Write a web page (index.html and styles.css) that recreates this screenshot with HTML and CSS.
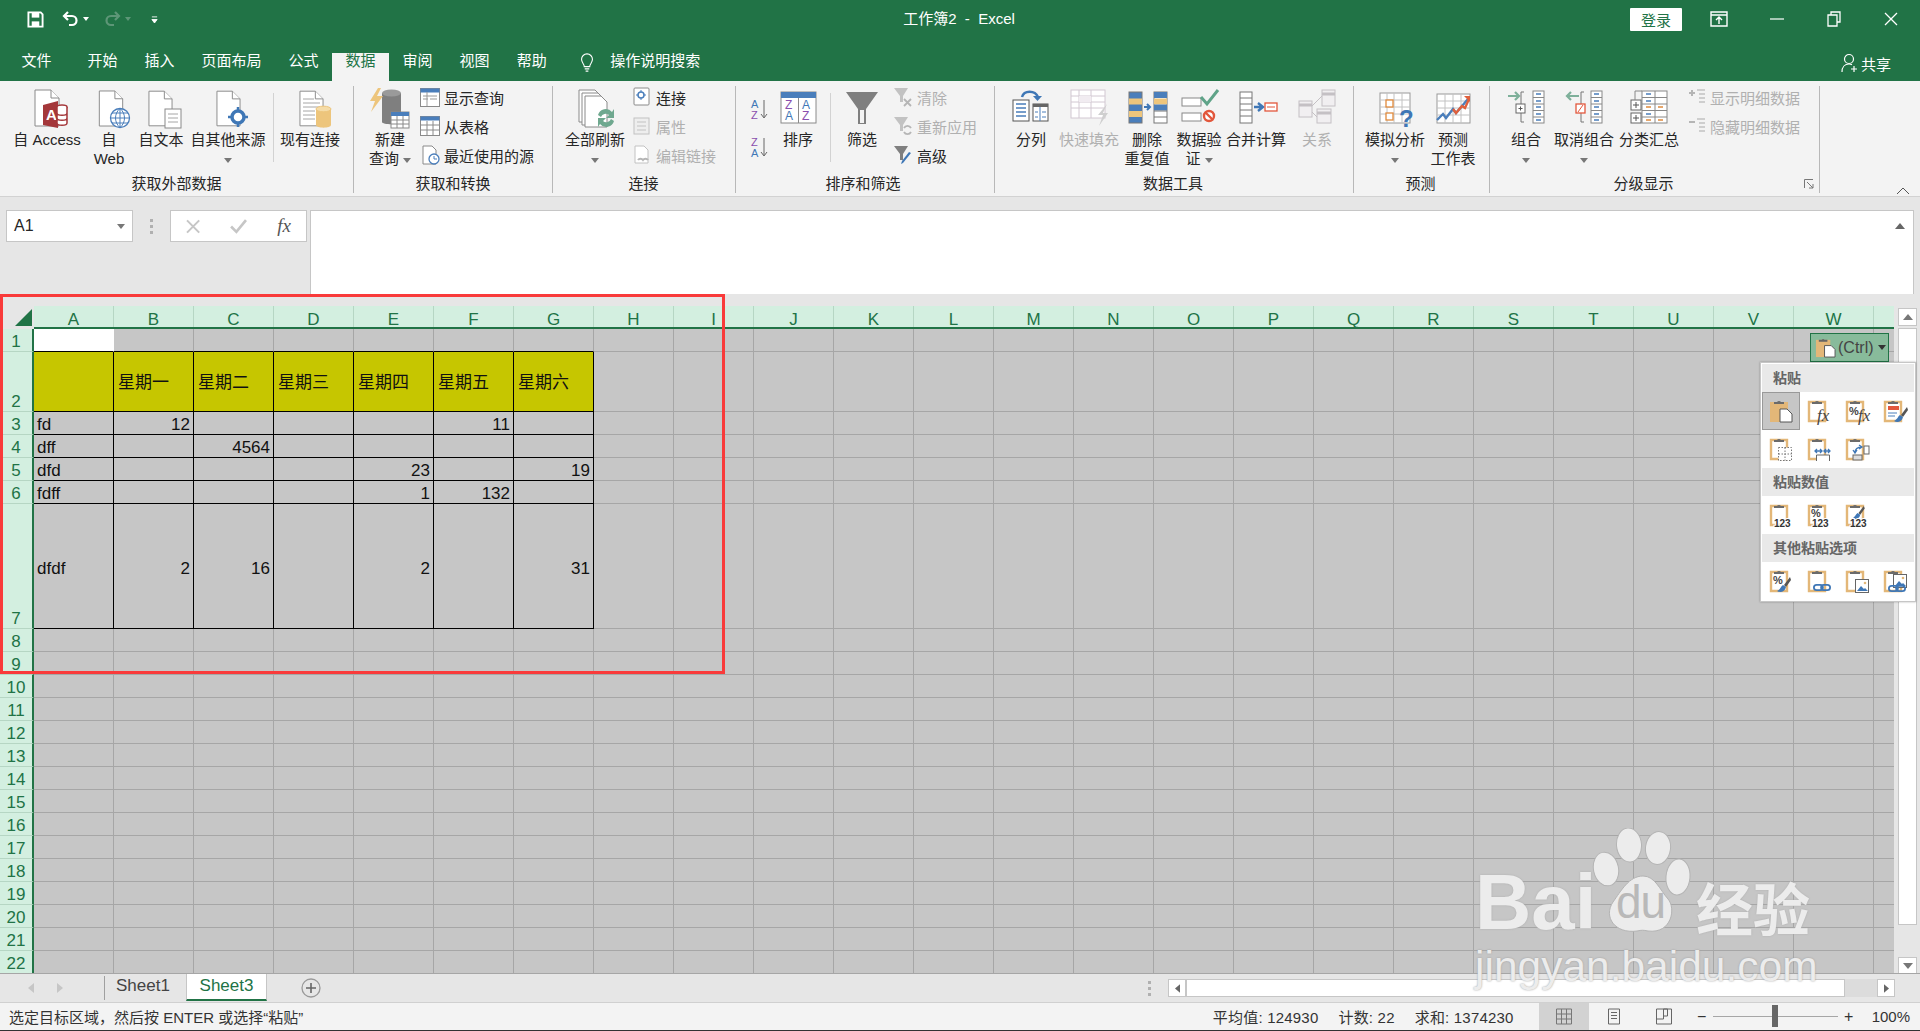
FILE: index.html
```html
<!DOCTYPE html>
<html lang="zh-CN">
<head>
<meta charset="utf-8">
<title>工作簿2 - Excel</title>
<link rel="stylesheet" href="styles.css">
</head>
<body>
<svg class="defs" aria-hidden="true">
  <symbol id="doc" viewBox="0 0 26 38"><path d="M1 1h16l8 8v28H1z" fill="#fff" stroke="#8a8a8a"/><path d="M17 1v8h8" fill="#fff" stroke="#8a8a8a"/></symbol>
  <symbol id="clip" viewBox="0 0 26 26"><path d="M3 4h16v19H3z" fill="#fff" stroke="#e3b778" stroke-width="2.4"/><path d="M6 6V4h3a2.5 2.5 0 0 1 4 0h3v2z" fill="#6b6b6b"/></symbol>
  <symbol id="brush" viewBox="0 0 14 18"><path d="M13 1 7 9l2 2 5-7z" fill="#555"/><path d="M6 9c-2 1-2 4-6 6 3 2 8 1 9-4z" fill="#3f77b6"/></symbol>
  <symbol id="chain" viewBox="0 0 20 10"><rect x="1" y="2" width="10" height="6" rx="3" fill="none" stroke="#3f77b6" stroke-width="2"/><rect x="9" y="2" width="10" height="6" rx="3" fill="none" stroke="#3f77b6" stroke-width="2"/></symbol>
  <symbol id="pic" viewBox="0 0 14 14"><rect x=".5" y=".5" width="13" height="13" fill="#fff" stroke="#666"/><path d="M2 12l4-5 3 3 1-1 3 3z" fill="#3f77b6"/><circle cx="10" cy="4" r="1.3" fill="#e3b778"/></symbol>
  <symbol id="tbl" viewBox="0 0 20 20"><rect x=".5" y=".5" width="19" height="19" fill="#fff" stroke="#8a8a8a"/><rect x=".5" y=".5" width="19" height="4" fill="#4a7ebb"/><path d="M.5 9h19M.5 14h19M7 5v15M13 5v15" stroke="#8a8a8a" fill="none"/></symbol>
</svg>
<div class="app">

  <header class="title">
    <div class="qat">
      <svg class="qi save" viewBox="0 0 18 18"><path d="M1.5 1.5h13l2 2v13h-15z" fill="none" stroke="#fff" stroke-width="2"/><rect x="5" y="2" width="8" height="5" fill="#fff"/><rect x="5" y="11" width="8" height="5" fill="#fff"/></svg>
      <svg class="qi undo" viewBox="0 0 18 18"><path d="M6 2 2 6l4 4M2.500 6H10a4.500 4.500 0 0 1 0 9H7" fill="none" stroke="#fff" stroke-width="2.200"/></svg>
      <i class="qcaret"></i>
      <svg class="qi redo" viewBox="0 0 18 18"><path d="M12 2l4 4-4 4M15.500 6H8a4.500 4.500 0 0 0 0 9h3" fill="none" stroke="#5d9677" stroke-width="2.200"/></svg>
      <i class="qcaret dim"></i>
      <svg class="qi more" viewBox="0 0 8 10"><path d="M1 2h6M1 5h6L4 9z" fill="#fff" stroke="#fff"/></svg>
    </div>
    <div class="doc-name">工作簿2 &nbsp;-&nbsp; Excel</div>
    <div class="winctl">
      <button class="login">登录</button>
      <svg class="wi opt" viewBox="0 0 18 16"><path d="M1 1h16v14H1zM1 4h16M9 13V7M6 9l3-3 3 3" fill="none" stroke="#fff" stroke-width="1.400"/></svg>
      <svg class="wi min" viewBox="0 0 14 14"><path d="M0 7h14" stroke="#fff" stroke-width="1.200"/></svg>
      <svg class="wi rest" viewBox="0 0 14 16"><path d="M1 4h9v11H1zM4 4V1h9v10h-3" fill="none" stroke="#fff" stroke-width="1.300"/></svg>
      <svg class="wi close" viewBox="0 0 14 14"><path d="M1 1l12 12M13 1 1 13" stroke="#fff" stroke-width="1.300"/></svg>
    </div>
  </header>

  <nav class="tabs">
    <span class="tab first">文件</span><span class="tab">开始</span><span class="tab">插入</span><span class="tab">页面布局</span><span class="tab">公式</span><span class="tab active">数据</span><span class="tab">审阅</span><span class="tab">视图</span><span class="tab">帮助</span>
    <svg class="bulb" viewBox="0 0 16 22"><path d="M5 15c0-3-3-4-3-8a6 6 0 0 1 12 0c0 4-3 5-3 8z" fill="none" stroke="#fff" stroke-width="1.200"/><path d="M5.500 17.500h5M6.500 20h3" stroke="#fff" stroke-width="1.500"/></svg>
    <span class="search">操作说明搜索</span>
    <span class="share"><svg class="share-i" viewBox="0 0 18 20"><circle cx="8" cy="6" r="4.500" fill="none" stroke="#fff" stroke-width="1.200"/><path d="M1 19c0-5 3-8 7-8 1 0 2 .2 3 .6M13 13v6M10 16h6" fill="none" stroke="#fff" stroke-width="1.200"/></svg>共享</span>
  </nav>

  <section class="ribbon">
    <div class="group g1">
      <div class="gbody">
        <div class="btn b-access"><svg class="ico" viewBox="0 0 44 44"><use href="#doc" x="9" y="3" width="26" height="38"/><path d="M18 19l15-4v27l-15-3z" fill="#a4373a"/><text class="t-a" x="21" y="34">A</text><ellipse cx="37" cy="21" rx="5" ry="2" fill="#fff" stroke="#a4373a" stroke-width="1.500"/><path d="M32 21v16c0 3 10 3 10 0V21M32 27c0 3 10 3 10 0M32 32c0 3 10 3 10 0" fill="#fff" stroke="#a4373a" stroke-width="1.500"/></svg><span class="lab">自 Access</span></div>
        <div class="btn b-web"><svg class="ico" viewBox="0 0 44 44"><use href="#doc" x="11" y="4" width="26" height="37"/><circle cx="33" cy="32" r="9.500" fill="#fff" stroke="#4a7ebb" stroke-width="1.300"/><path d="M23.500 32h19M25 27h16M25 37h16M33 22.500v19M33 22.500c-6 5-6 14 0 19M33 22.500c6 5 6 14 0 19" fill="none" stroke="#4a7ebb"/></svg><span class="lab">自<br>Web</span></div>
        <div class="btn b-text"><svg class="ico" viewBox="0 0 44 44"><use href="#doc" x="9" y="4" width="25" height="37"/><rect x="26" y="23" width="16" height="19" fill="#fff" stroke="#8a8a8a"/><path d="M29 28h10M29 32h10M29 36h10" stroke="#a6a6a6" fill="none"/></svg><span class="lab">自文本</span></div>
        <div class="btn b-other"><svg class="ico" viewBox="0 0 44 44"><use href="#doc" x="10" y="4" width="25" height="37"/><circle cx="32" cy="31" r="6" fill="#fff" stroke="#3f77b6" stroke-width="3.500"/><path d="M32 21v5M32 36v5M22 31h5M37 31h5" stroke="#3f77b6" stroke-width="2.500"/></svg><span class="lab">自其他来源<br><i class="caret"></i></span></div>
        <div class="vsep"></div>
        <div class="btn b-exist"><svg class="ico" viewBox="0 0 44 44"><use href="#doc" x="11" y="4" width="25" height="37"/><path d="M15 13h11M15 17h17M15 21h17M15 25h12M15 29h12M15 33h12" stroke="#a6a6a6"/><path d="M28 23v16c0 3.500 15 3.500 15 0V23z" fill="#edc57c"/><ellipse cx="35.500" cy="23" rx="7.500" ry="2.800" fill="#f5dca8" stroke="#edc57c"/></svg><span class="lab">现有连接</span></div>
      </div>
      <div class="glabel">获取外部数据</div>
    </div>

    <div class="group g2">
      <div class="gbody">
        <div class="btn b-query"><svg class="ico" viewBox="0 0 44 44"><path d="M14 7v29c0 3 19 3 19 0V7z" fill="#7f7f7f"/><ellipse cx="23.500" cy="7" rx="9.500" ry="3.500" fill="#9a9a9a"/><path d="M10 2 2 15h5L3 26l12-16H9l4-8z" fill="#edc57c"/><rect x="23" y="26" width="18" height="16" fill="#fff" stroke="#8a8a8a"/><rect x="23" y="26" width="18" height="4" fill="#4a7ebb"/><path d="M23 34h18M23 38h18M29 30v12M35 30v12" stroke="#8a8a8a"/></svg><span class="lab">新建<br>查询 <i class="caret"></i></span></div>
        <div class="small">
          <div class="si"><svg class="sico" viewBox="0 0 20 20"><rect x=".5" y="1.500" width="19" height="18" fill="#fff" stroke="#8a8a8a"/><rect x=".5" y="1.500" width="19" height="4" fill="#4a7ebb"/><path d="M3 9h14M3 12h5M10 12h7M7 5v14" stroke="#999"/></svg>显示查询</div>
          <div class="si"><svg class="sico" viewBox="0 0 20 20"><use href="#tbl"/></svg>从表格</div>
          <div class="si"><svg class="sico" viewBox="0 0 20 20"><path d="M3 1h9l4 4v14H3z" fill="#fff" stroke="#8a8a8a"/><circle cx="14" cy="14" r="5" fill="#fff" stroke="#4a7ebb" stroke-width="1.300"/><path d="M14 11v3h3" fill="none" stroke="#4a7ebb"/></svg>最近使用的源</div>
        </div>
      </div>
      <div class="glabel">获取和转换</div>
    </div>

    <div class="group g3">
      <div class="gbody">
        <div class="btn b-refresh"><svg class="ico" viewBox="0 0 44 44"><path d="M6 4h16l6 6v26H6z" fill="#fff" stroke="#8a8a8a"/><path d="M9 7h16l6 6v26H9z" fill="#fff" stroke="#8a8a8a"/><path d="M12 10h16l6 6v25H12z" fill="#fff" stroke="#8a8a8a"/><path d="M25 29a8 8 0 0 1 14-3l2-3v9h-8l3-3a5 5 0 0 0-8 2zM41 35a8 8 0 0 1-14 3l-2 3v-9h8l-3 3a5 5 0 0 0 8-2z" fill="#6fa88f"/></svg><span class="lab">全部刷新<br><i class="caret"></i></span></div>
        <div class="small">
          <div class="si"><svg class="sico" viewBox="0 0 20 20"><rect x="2" y="1" width="15" height="17" rx="1" fill="#fff" stroke="#8a8a8a"/><circle cx="9" cy="8" r="3" fill="#fff" stroke="#4a7ebb" stroke-width="1.500"/><path d="M9 3v2M9 11v2M4 8h2M12 8h2" stroke="#4a7ebb"/></svg>连接</div>
          <div class="si off"><svg class="sico" viewBox="0 0 20 20"><rect x="2" y="2" width="15" height="16" fill="#eee" stroke="#c2c2c2"/><path d="M5 6h9M5 10h9M5 14h9" stroke="#c2c2c2"/></svg>属性</div>
          <div class="si off"><svg class="sico" viewBox="0 0 20 20"><path d="M3 1h9l4 4v13H3z" fill="#fff" stroke="#c2c2c2"/><path d="M6 15a3 3 0 0 1 5 0 3 3 0 0 1 5 0" fill="none" stroke="#b5b5b5" stroke-width="2"/></svg>编辑链接</div>
        </div>
      </div>
      <div class="glabel">连接</div>
    </div>

    <div class="group g4">
      <div class="gbody">
        <div class="azcol">
          <svg class="az" viewBox="0 0 24 24"><text class="t-az1 blue" x="3" y="11">A</text><text class="t-az1 purple" x="3" y="22">Z</text><path d="M16 3v17M13 17l3 4 3-4" fill="none" stroke="#666"/></svg>
          <svg class="az" viewBox="0 0 24 24"><text class="t-az1 purple" x="3" y="11">Z</text><text class="t-az1 blue" x="3" y="22">A</text><path d="M16 3v17M13 17l3 4 3-4" fill="none" stroke="#666"/></svg>
        </div>
        <div class="btn b-sort"><svg class="ico" viewBox="0 0 44 44"><rect x="5" y="6" width="35" height="31" fill="#fff" stroke="#8a8a8a"/><rect x="5" y="6" width="35" height="6" fill="#4a7ebb"/><path d="M22.500 12v25" stroke="#8a8a8a"/><text class="t-az purple" x="9" y="23">Z</text><text class="t-az blue" x="9" y="34">A</text><text class="t-az blue" x="26" y="23">A</text><text class="t-az purple" x="26" y="34">Z</text></svg><span class="lab">排序</span></div>
        <div class="vsep"></div>
        <div class="btn b-filter"><svg class="ico" viewBox="0 0 44 44"><path d="M6 6h32L26 23v15h-8V23z" fill="#7f7f7f"/><path d="M20 24h4v13h-4z" fill="#f3f3f3"/></svg><span class="lab">筛选</span></div>
        <div class="small">
          <div class="si off"><svg class="sico" viewBox="0 0 20 20"><path d="M1 1h14L10 9v6H7V9z" fill="#c2c2c2"/><path d="M11 12l7 7M18 12l-7 7" stroke="#b5b5b5" stroke-width="1.800"/></svg>清除</div>
          <div class="si off"><svg class="sico" viewBox="0 0 20 20"><path d="M1 1h14L10 9v6H7V9z" fill="#c2c2c2"/><path d="M11 12a4 4 0 0 1 7 0M18 16a4 4 0 0 1-7 0" fill="none" stroke="#b5b5b5" stroke-width="1.800"/></svg>重新应用</div>
          <div class="si"><svg class="sico" viewBox="0 0 20 20"><path d="M1 1h14L10 9v6H7V9z" fill="#7f7f7f"/><path d="M18 8l-8 10-2 1 1-3 7-9z" fill="#3f77b6"/></svg>高级</div>
        </div>
      </div>
      <div class="glabel">排序和筛选</div>
    </div>

    <div class="group g5">
      <div class="gbody">
        <div class="btn b-split"><svg class="ico" viewBox="0 0 44 44"><rect x="4" y="14" width="16" height="21" fill="#fff" stroke="#555"/><path d="M7 18h10M7 22h10M7 26h10M7 30h10" stroke="#4a7ebb" stroke-width="1.400"/><rect x="24" y="18" width="15" height="17" fill="#fff" stroke="#555"/><rect x="24" y="18" width="15" height="3" fill="#666"/><path d="M31 21v14M26 26h3M33 26h4M26 31h3M33 31h4" stroke="#4a7ebb"/><path d="M13 11c2-7 13-7 16 0" fill="none" stroke="#3f77b6" stroke-width="2.500"/><path d="M24 10h9l-4.500 5z" fill="#3f77b6"/></svg><span class="lab">分列</span></div>
        <div class="btn b-flash"><svg class="ico" viewBox="0 0 44 44"><rect x="4" y="4" width="34" height="28" fill="#fff" stroke="#d2c8d2"/><path d="M4 10h34M4 16h34M4 22h34M12 4v28M24 4v28" stroke="#d2c8d2"/><path d="M12 10h12v6H12z" fill="#f1ecf1"/><path d="M40 18 31 29h5l-4 11 9-13h-5z" fill="#cfcfcf"/></svg><span class="lab off">快速填充</span></div>
        <div class="btn b-dup"><svg class="ico" viewBox="0 0 44 44"><rect x="4" y="6" width="13" height="31" fill="#4a7ebb" stroke="#777"/><path d="M4 12.500h13v6H4zM4 25h13v6H4z" fill="#edc57c"/><rect x="29" y="6" width="13" height="31" fill="#fff" stroke="#777"/><path d="M29 6h13v6H29z" fill="#4a7ebb"/><path d="M29 12.500h13v6H29z" fill="#edc57c"/><path d="M29 18.500h13v6H29z" fill="#4a7ebb"/><path d="M29 25h13M29 31h13" stroke="#777"/><path d="M19 21h5M22 18l3 3-3 3" fill="none" stroke="#3f77b6" stroke-width="2"/></svg><span class="lab">删除<br>重复值</span></div>
        <div class="btn b-valid"><svg class="ico" viewBox="0 0 44 44"><rect x="5" y="12" width="19" height="8" fill="#fff" stroke="#888"/><rect x="5" y="27" width="19" height="8" fill="#fff" stroke="#888"/><path d="M24 11l6 7 11-14" fill="none" stroke="#5fa388" stroke-width="3"/><circle cx="32" cy="30" r="5" fill="#fff" stroke="#e2573c" stroke-width="2.400"/><path d="M28.500 26.500l7 7" stroke="#e2573c" stroke-width="2.400"/></svg><span class="lab">数据验<br>证 <i class="caret"></i></span></div>
        <div class="btn b-merge"><svg class="ico" viewBox="0 0 44 44"><rect x="6" y="6" width="12" height="31" fill="#fff" stroke="#777"/><path d="M6 12h12M6 18h12M6 24h12M6 30h12" stroke="#777"/><path d="M20 21h7M24 17l5 4-5 4" fill="none" stroke="#3f77b6" stroke-width="2.400"/><rect x="31" y="17" width="12" height="8" fill="#fff" stroke="#e2573c" stroke-width="1.300"/><path d="M33 21h8" stroke="#e2573c"/></svg><span class="lab">合并计算</span></div>
        <div class="btn b-rel off"><svg class="ico" viewBox="0 0 44 44"><g fill="#f1eff1" stroke="#c4c0c4"><rect x="4" y="15" width="13" height="16"/><rect x="27" y="4" width="13" height="16"/><rect x="22" y="23" width="14" height="14"/></g><path d="M4 19h13M27 8h13M22 27h14" stroke="#c4c0c4" stroke-width="3"/><path d="M17 20 27 10M17 26l5 5" stroke="#c4c0c4"/></svg><span class="lab">关系</span></div>
      </div>
      <div class="glabel">数据工具</div>
    </div>

    <div class="group g6">
      <div class="gbody">
        <div class="btn b-whatif"><svg class="ico" viewBox="0 0 44 44"><rect x="7" y="7" width="30" height="30" fill="#fff" stroke="#999"/><path d="M7 14h30M7 21h30M7 28h30M14 7v30M21 7v30M29 7v30" stroke="#c2c2c2"/><rect x="13" y="14" width="7" height="7" fill="#fff" stroke="#e08a3c" stroke-width="1.300"/><rect x="13" y="27" width="7" height="7" fill="#fff" stroke="#e08a3c" stroke-width="1.300"/><text class="t-q" x="26" y="41">?</text></svg><span class="lab">模拟分析<br><i class="caret"></i></span></div>
        <div class="btn b-fore"><svg class="ico" viewBox="0 0 44 44"><rect x="6" y="8" width="33" height="29" fill="#fff" stroke="#999"/><path d="M6 15h33M6 22h33M6 29h33M14 8v29M22 8v29M30 8v29" stroke="#c2c2c2"/><path d="M6 34l6-6 3 4 7-9 3 4 12-14" fill="none" stroke="#4a7ebb" stroke-width="2.400"/><path d="M22 23l3 4 6-7 3 2 4-9" fill="none" stroke="#e0603c" stroke-width="2.400"/><path d="M33 10h6v6z" fill="#e0603c"/></svg><span class="lab">预测<br>工作表</span></div>
      </div>
      <div class="glabel">预测</div>
    </div>

    <div class="group g7">
      <div class="gbody">
        <div class="btn b-grp"><svg class="ico" viewBox="0 0 44 44"><path d="M4 10h11M11 6l4 4-4 4" fill="none" stroke="#7eb09a" stroke-width="2.200"/><path d="M20 6h-3v30h3" fill="none" stroke="#777"/><rect x="12" y="18" width="9" height="9" fill="#fff" stroke="#666"/><path d="M14.500 22.500h4M16.500 20.500v4" stroke="#555"/><rect x="29" y="5" width="11" height="32" fill="#fff" stroke="#888"/><path d="M29 11.500h11M29 18h11M29 24.500h11M29 31h11" stroke="#888"/><path d="M32 8h5M32 15h5M32 21h5M32 28h5M32 34h5" stroke="#4a7ebb" stroke-width="1.300"/></svg><span class="lab">组合<br><i class="caret"></i></span></div>
        <div class="btn b-ungrp"><svg class="ico" viewBox="0 0 44 44"><path d="M17 10H5M9 6l-4 4 4 4" fill="none" stroke="#7eb09a" stroke-width="2.200"/><path d="M22 6h-3v30h3" fill="none" stroke="#777"/><rect x="14" y="18" width="9" height="9" fill="#fff" stroke="#e2573c" stroke-width="1.300"/><path d="M16 26l5-7" stroke="#e2573c"/><rect x="29" y="5" width="11" height="32" fill="#fff" stroke="#888"/><path d="M29 11.500h11M29 18h11M29 24.500h11M29 31h11" stroke="#888"/><path d="M32 8h5M32 15h5M32 21h5M32 28h5M32 34h5" stroke="#4a7ebb" stroke-width="1.300"/></svg><span class="lab">取消组合<br><i class="caret"></i></span></div>
        <div class="btn b-sub"><svg class="ico" viewBox="0 0 44 44"><rect x="15" y="5" width="25" height="32" fill="#fff" stroke="#888"/><path d="M15 11.500h25M15 18h25M15 24.500h25M15 31h25M28 5v32" stroke="#888"/><path d="M19 8h5M19 15h5M19 28h5" stroke="#4a7ebb" stroke-width="1.300"/><path d="M19 21h5M31 21h5M19 34h5M31 34h5" stroke="#e08a3c" stroke-width="1.300"/><rect x="4" y="14" width="10" height="10" fill="#fff" stroke="#666"/><rect x="4" y="27" width="10" height="10" fill="#fff" stroke="#666"/><path d="M6 19h6M9 16v6M6 32h6M9 29v6" stroke="#555"/><path d="M8 14V5h7" fill="none" stroke="#888"/></svg><span class="lab">分类汇总</span></div>
        <div class="small">
          <div class="si off"><svg class="sico" viewBox="0 0 20 20"><path d="M1 6h6M4 3v6" stroke="#b5b5b5" stroke-width="2"/><path d="M9 3h8M11 7h6M11 11h6M11 15h6" stroke="#c2c2c2" stroke-width="1.500"/></svg>显示明细数据</div>
          <div class="si off"><svg class="sico" viewBox="0 0 20 20"><path d="M1 6h6" stroke="#b5b5b5" stroke-width="2"/><path d="M9 3h8M11 7h6M11 11h6M11 15h6" stroke="#c2c2c2" stroke-width="1.500"/></svg>隐藏明细数据</div>
        </div>
      </div>
      <div class="glabel">分级显示<svg class="launch" viewBox="0 0 10 10"><path d="M.5 9V.5H9M3 3l6 6M5 9h4V5" fill="none" stroke="#777"/></svg></div>
    </div>
    <svg class="collapse" viewBox="0 0 14 8"><path d="M1 7l6-6 6 6" fill="none" stroke="#555"/></svg>
  </section>

  <section class="formula">
    <div class="namebox"><span>A1</span><i class="caret"></i></div>
    <div class="grip"><b></b><b></b><b></b></div>
    <div class="fxbox">
      <svg class="fxi" viewBox="0 0 14 14"><path d="M1 1l12 12M13 1 1 13" stroke="#c6c6c6" stroke-width="2"/></svg>
      <svg class="fxi" viewBox="0 0 16 14"><path d="M1 7l5 5 9-11" fill="none" stroke="#c6c6c6" stroke-width="2.500"/></svg>
      <span class="fxt">fx</span>
    </div>
    <div class="input"><svg class="upcaret" viewBox="0 0 10 6"><path d="M0 6l5-6 5 6z" fill="#666"/></svg></div>
  </section>

  <section class="sheetarea">
    <div class="sheet">
      <div class="colhead">
        <div class="corner"><svg viewBox="0 0 16 16"><path d="M16 0v16H0z" fill="#217346"/></svg></div>
        <span>A</span><span>B</span><span>C</span><span>D</span><span>E</span><span>F</span><span>G</span><span>H</span><span>I</span><span>J</span><span>K</span><span>L</span><span>M</span><span>N</span><span>O</span><span>P</span><span>Q</span><span>R</span><span>S</span><span>T</span><span>U</span><span>V</span><span>W</span><span></span>
      </div>
      <div class="row"><div class="rh">1</div><div class="cell top sel"></div><div class="cell top"></div><div class="cell top"></div><div class="cell top"></div><div class="cell top"></div><div class="cell top"></div><div class="cell top"></div><div class="fill"></div></div>
      <div class="row r2"><div class="rh low">2</div><div class="cell hd"></div><div class="cell hd">星期一</div><div class="cell hd">星期二</div><div class="cell hd">星期三</div><div class="cell hd">星期四</div><div class="cell hd">星期五</div><div class="cell hd">星期六</div><div class="fill"></div></div>
      <div class="row"><div class="rh">3</div><div class="cell">fd</div><div class="cell num">12</div><div class="cell"></div><div class="cell"></div><div class="cell"></div><div class="cell num">11</div><div class="cell"></div><div class="fill"></div></div>
      <div class="row"><div class="rh">4</div><div class="cell">dff</div><div class="cell"></div><div class="cell num">4564</div><div class="cell"></div><div class="cell"></div><div class="cell"></div><div class="cell"></div><div class="fill"></div></div>
      <div class="row"><div class="rh">5</div><div class="cell">dfd</div><div class="cell"></div><div class="cell"></div><div class="cell"></div><div class="cell num">23</div><div class="cell"></div><div class="cell num">19</div><div class="fill"></div></div>
      <div class="row"><div class="rh">6</div><div class="cell">fdff</div><div class="cell"></div><div class="cell"></div><div class="cell"></div><div class="cell num">1</div><div class="cell num">132</div><div class="cell"></div><div class="fill"></div></div>
      <div class="row r7"><div class="rh low">7</div><div class="cell mid">dfdf</div><div class="cell mid num">2</div><div class="cell mid num">16</div><div class="cell mid"></div><div class="cell mid num">2</div><div class="cell mid"></div><div class="cell mid num">31</div><div class="fill"></div></div>
      <div class="row"><div class="rh">8</div><div class="fill"></div></div>
      <div class="row"><div class="rh">9</div><div class="fill"></div></div>
      <div class="row"><div class="rh">10</div><div class="fill"></div></div>
      <div class="row"><div class="rh">11</div><div class="fill"></div></div>
      <div class="row"><div class="rh">12</div><div class="fill"></div></div>
      <div class="row"><div class="rh">13</div><div class="fill"></div></div>
      <div class="row"><div class="rh">14</div><div class="fill"></div></div>
      <div class="row"><div class="rh">15</div><div class="fill"></div></div>
      <div class="row"><div class="rh">16</div><div class="fill"></div></div>
      <div class="row"><div class="rh">17</div><div class="fill"></div></div>
      <div class="row"><div class="rh">18</div><div class="fill"></div></div>
      <div class="row"><div class="rh">19</div><div class="fill"></div></div>
      <div class="row"><div class="rh">20</div><div class="fill"></div></div>
      <div class="row"><div class="rh">21</div><div class="fill"></div></div>
      <div class="row"><div class="rh">22</div><div class="fill"></div></div>
    </div>
    <div class="vscroll">
      <div class="sbtn"><svg viewBox="0 0 10 6"><path d="M0 6l5-6 5 6z" fill="#777"/></svg></div>
      <div class="vthumb"></div>
      <div class="sbtn"><svg viewBox="0 0 10 6"><path d="M0 0l5 6 5-6z" fill="#777"/></svg></div>
    </div>
  </section>

  <section class="tabbar">
    <svg class="nav n1" viewBox="0 0 6 10"><path d="M6 0 0 5l6 5z" fill="#c6c6c6"/></svg>
    <svg class="nav n2" viewBox="0 0 6 10"><path d="M0 0l6 5-6 5z" fill="#c6c6c6"/></svg>
    <div class="tsep"></div>
    <span class="sheet1">Sheet1</span>
    <span class="sheet3">Sheet3</span>
    <svg class="plus" viewBox="0 0 20 20"><circle cx="10" cy="10" r="9" fill="none" stroke="#999" stroke-width="1.300"/><path d="M5 10h10M10 5v10" stroke="#666" stroke-width="1.600"/></svg>
    <div class="grip h"><b></b><b></b><b></b></div>
    <div class="hscroll">
      <div class="hbtn"><svg viewBox="0 0 6 10"><path d="M6 0 0 5l6 5z" fill="#666"/></svg></div>
      <div class="hthumb"></div>
      <div class="htrack"></div>
      <div class="hbtn"><svg viewBox="0 0 6 10"><path d="M0 0l6 5-6 5z" fill="#666"/></svg></div>
    </div>
  </section>

  <footer class="status">
    <span class="msg">选定目标区域，然后按 ENTER 或选择“粘贴”</span>
    <span class="stat first-stat">平均值: 124930</span>
    <span class="stat">计数: 22</span>
    <span class="stat">求和: 1374230</span>
    <div class="view on"><svg viewBox="0 0 16 16"><path d="M.5.5h15v15H.5zM.5 5.500h15M.5 10.500h15M5.500.5v15M10.500.5v15" fill="none" stroke="#777"/></svg></div>
    <div class="view"><svg viewBox="0 0 16 16"><path d="M2.500.5h11v15h-11zM5 4h6M5 7h6M5 10h6" fill="none" stroke="#666"/></svg></div>
    <div class="view"><svg viewBox="0 0 16 16"><path d="M.5.5h15v15H.5zM.5 10.500h7v-10M7.500.5h4v7h-4" fill="none" stroke="#666"/></svg></div>
    <span class="zsym">−</span>
    <div class="zoomtrack"><i></i></div>
    <span class="zsym plusz">+</span>
    <span class="pct">100%</span>
  </footer>

  <div class="marquee"></div>

  <div class="pastebtn"><svg class="pb-i" viewBox="0 0 22 22"><path d="M1 3h15v18H1z" fill="#e3b778"/><path d="M4 5V3h3a2 2 0 0 1 3 0h3v2z" fill="#666"/><path d="M10 9h7l4 4v8H10z" fill="#fff" stroke="#555"/></svg><span>(Ctrl)</span><i class="caret dark"></i></div>

  <div class="pastemenu">
    <div class="mhead">粘贴</div>
    <div class="mrow">
      <div class="mi on"><svg viewBox="0 0 26 26"><path d="M2 4h18v20H2z" fill="#e3b778"/><path d="M6 6V4h3a2.500 2.500 0 0 1 4 0h3v2z" fill="#6b6b6b"/><path d="M12 11h7l5 5v8H12z" fill="#fff" stroke="#555"/></svg></div>
      <div class="mi"><svg viewBox="0 0 26 26"><use href="#clip"/><text class="t-fx" x="11" y="23">fx</text></svg></div>
      <div class="mi"><svg viewBox="0 0 26 26"><use href="#clip"/><text class="t-pc" x="5" y="17">%</text><text class="t-fx" x="14" y="23">fx</text></svg></div>
      <div class="mi"><svg viewBox="0 0 26 26"><use href="#clip"/><path d="M6 8h11v4H6z" fill="#e2573c"/><path d="M6 15h9M6 18h7" stroke="#4a7ebb"/><use href="#brush" x="12" y="8" width="14" height="18"/></svg></div>
    </div>
    <div class="mrow">
      <div class="mi"><svg viewBox="0 0 26 26"><use href="#clip"/><path d="M10.500 11.500h13v13h-13zM17 11.500v13M10.500 18h13" fill="#fff" stroke="#777" stroke-dasharray="1.500 1.500"/></svg></div>
      <div class="mi"><svg viewBox="0 0 26 26"><use href="#clip"/><path d="M9 15h7M11 13l-2 2 2 2M14 13l2 2-2 2M18 15h6M20 13l-2 2 2 2M22 13l2 2-2 2" fill="none" stroke="#3f77b6" stroke-width="1.300"/><path d="M10.500 25v-6h13v6" fill="#fff" stroke="#666"/></svg></div>
      <div class="mi"><svg viewBox="0 0 26 26"><use href="#clip"/><rect x="20" y="10" width="5" height="8" fill="#fff" stroke="#666"/><rect x="9" y="19" width="9" height="5" fill="#ddd" stroke="#666"/><path d="M11 17c0-4 3-6 7-6M15 9l3 2-3 2M9 14l2 3 2-3" fill="none" stroke="#3f77b6" stroke-width="1.300"/></svg></div>
    </div>
    <div class="mhead">粘贴数值</div>
    <div class="mrow">
      <div class="mi"><svg viewBox="0 0 26 26"><use href="#clip"/><text class="t-123" x="6" y="25">123</text></svg></div>
      <div class="mi"><svg viewBox="0 0 26 26"><use href="#clip"/><text class="t-pc" x="5" y="15">%</text><text class="t-123" x="6" y="25">123</text></svg></div>
      <div class="mi"><svg viewBox="0 0 26 26"><use href="#clip"/><use href="#brush" x="8" y="3" width="13" height="16"/><text class="t-123" x="6" y="25">123</text></svg></div>
    </div>
    <div class="mhead">其他粘贴选项</div>
    <div class="mrow">
      <div class="mi"><svg viewBox="0 0 26 26"><use href="#clip"/><text class="t-pc" x="5" y="16">%</text><use href="#brush" x="9" y="8" width="14" height="18"/></svg></div>
      <div class="mi"><svg viewBox="0 0 26 26"><use href="#clip"/><use href="#chain" x="7" y="15" width="18" height="9"/></svg></div>
      <div class="mi"><svg viewBox="0 0 26 26"><use href="#clip"/><use href="#pic" x="11" y="11" width="14" height="14"/></svg></div>
      <div class="mi"><svg viewBox="0 0 26 26"><use href="#clip"/><use href="#pic" x="11" y="6" width="14" height="14"/><use href="#chain" x="6" y="16" width="18" height="9"/></svg></div>
    </div>
  </div>

  <div class="wm">
    <div class="wm-logo">
      <span class="wm-bai">Bai</span>
      <span class="wm-paw">
        <svg viewBox="0 0 100 108"><g fill="#ececec" stroke="#b4b4b4"><ellipse cx="13" cy="41" rx="12.500" ry="17" transform="rotate(-12 13 41)"/><ellipse cx="36" cy="17" rx="12.500" ry="17" transform="rotate(-5 36 17)"/><ellipse cx="65" cy="20" rx="12.500" ry="16.500" transform="rotate(8 65 20)"/><ellipse cx="85" cy="49" rx="12" ry="18" transform="rotate(5 85 49)"/><path d="M50 48c12 0 17 14 25 23 8 9 4 35-20 32-5-1-6-1-11 0C22 106 10 89 20 74c8-11 16-26 30-26z"/></g></svg>
        <span class="wm-du">du</span>
      </span>
      <span class="wm-cn">经验</span>
    </div>
    <div class="wm-url">jingyan.baidu.com</div>
  </div>
</div>
</body>
</html>
```

FILE: styles.css
```css
* { box-sizing: border-box; }
html, body { margin: 0; padding: 0; }
body { font-family: "Liberation Sans", "Noto Sans CJK SC", sans-serif; font-size: 15px; color: #262626; background: #e6e6e6; }
.defs { position: absolute; width: 0; height: 0; }
i { font-style: normal; }
.app { position: relative; width: 1920px; height: 1031px; overflow: hidden; display: flex; flex-direction: column; }

/* title bar */
.title { height: 53px; background: #217346; color: #fff; display: grid; grid-template-columns: 1fr auto 1fr; }
.qat { display: flex; align-items: center; height: 38px; padding-left: 27px; }
.qi { display: block; }
.save { width: 17px; height: 17px; }
.undo { width: 18px; height: 18px; margin-left: 18px; }
.qcaret { width: 0; height: 0; border: 3.500px solid transparent; border-top: 4px solid #fff; border-bottom: 0; margin-left: 3px; }
.qcaret.dim { border-top-color: #5d9677; margin-left: 4px; }
.redo { width: 18px; height: 18px; margin-left: 14px; }
.more { width: 7px; height: 9px; margin-left: 20px; }
.doc-name { font-size: 15px; line-height: 38px; margin-left: -2px; }
.winctl { display: flex; align-items: center; height: 38px; justify-content: flex-end; }
.login { width: 52px; height: 23px; background: #fff; color: #217346; border: 0; padding: 0; font: 15px "Noto Sans CJK SC", sans-serif; border-radius: 1px; margin-right: 28px; }
.wi { display: block; }
.opt { width: 18px; height: 16px; margin-right: 42px; }
.min { width: 14px; height: 14px; margin-right: 43px; }
.rest { width: 14px; height: 16px; margin-right: 43px; }
.close { width: 14px; height: 14px; margin-right: 22px; }

/* tabs */
.tabs { height: 28px; background: #217346; color: #fff; display: flex; align-items: stretch; padding-left: 8px; font-size: 15px; }
.tab { padding: 0 13.500px; line-height: 16px; }
.tab.first { margin-right: 9px; }
.tab.active { background: #f3f3f3; color: #217346; }
.bulb { width: 16px; height: 20px; margin: 0 0 0 19px; }
.search { margin-left: 15px; line-height: 16px; }
.share { margin-left: auto; margin-right: 29px; display: flex; align-items: center; height: 20px; gap: 2px; }
.share-i { width: 18px; height: 20px; }

/* ribbon */
.ribbon { height: 116px; background: #f3f3f3; border-bottom: 1px solid #d2d2d2; display: flex; padding-top: 5px; position: relative; }
.group { height: 107px; border-right: 1px solid #b8b8b8; display: flex; flex-direction: column; }
.g1 { width: 354px; padding-left: 10px; }
.g2 { width: 199px; padding-left: 12px; }
.g3 { width: 183px; padding-left: 7px; }
.g4 { width: 259px; padding-left: 12px; }
.g5 { width: 359px; padding-left: 8px; }
.g6 { width: 136px; padding-left: 9px; }
.g7 { width: 330px; padding-left: 11px; }
.gbody { display: flex; height: 90px; }
.glabel { text-align: center; line-height: 18px; margin-top: 3px; position: relative; }
.g1 .glabel { margin-left: -10px; }
.g2 .glabel { margin-left: -12px; }
.g3 .glabel { margin-left: -7px; margin-right: 1px; }
.g4 .glabel { margin-left: -12px; margin-right: 4px; }
.g5 .glabel { margin-left: -8px; margin-right: 2px; }
.g6 .glabel { margin-left: -9px; margin-right: 2px; }
.g7 .glabel { margin-left: -11px; margin-right: 22px; }
.launch { position: absolute; right: -17px; top: 4px; width: 10px; height: 10px; }
.btn { display: flex; flex-direction: column; align-items: center; text-align: center; flex: none; }
.ico { width: 44px; height: 44px; flex: none; overflow: visible; }
.lab { line-height: 19px; white-space: nowrap; }
.lab.off, .btn.off .lab, .si.off { color: #b0b0b0; }
.caret { display: inline-block; vertical-align: middle; width: 0; height: 0; border: 4px solid transparent; border-top: 5px solid #777; border-bottom: 0; }
.caret.dark { border-top-color: #333; }
.b-access { width: 74px; }
.b-web { width: 50px; }
.b-text { width: 54px; }
.b-other { width: 80px; }
.b-exist { width: 72px; }
.vsep { width: 1px; height: 69px; background: #d2d2d2; margin: 7px 0 0 5px; flex: none; }
.b-query { width: 48px; }
.b-refresh { width: 70px; }
.b-sort { width: 50px; margin-left: 1px; }
.b-filter { width: 50px; margin-left: 6px; }
.b-sort + .vsep { margin-left: 7px; }
.azcol { width: 24px; display: flex; flex-direction: column; gap: 14px; padding-top: 11px; }
.az { width: 24px; height: 24px; display: block; flex: none; }
.b-split { width: 56px; }
.b-flash { width: 60px; }
.b-dup { width: 56px; }
.b-valid { width: 48px; }
.b-merge { width: 66px; }
.b-rel { width: 56px; }
.b-whatif { width: 64px; }
.b-fore { width: 52px; }
.b-grp { width: 50px; }
.b-ungrp { width: 66px; }
.b-sub { width: 64px; }
.small { display: flex; flex-direction: column; gap: 5px; margin-left: 6px; margin-top: -1px; }
.g3 .small { margin-left: 2px; }
.g7 .small { margin-left: 7px; }
.g7 .si { gap: 2px; }
.si { height: 24px; display: flex; align-items: center; gap: 4px; white-space: nowrap; }
.sico { width: 20px; height: 20px; flex: none; }
.collapse { width: 14px; height: 8px; margin: 101px 0 0 76px; flex: none; }

/* svg text */
.t-a { font: bold 15px "Liberation Sans", sans-serif; fill: #fff; }
.t-az { font: 12px "Liberation Sans", sans-serif; }
.t-az1 { font: 11px "Liberation Sans", sans-serif; }
.blue { fill: #3f77b6; }
.purple { fill: #8a4fae; }
.t-q { font: bold 24px "Liberation Sans", sans-serif; fill: #3f77b6; }
.t-fx { font: italic 17px "Liberation Serif", serif; fill: #444; }
.t-pc { font: bold 11px "Liberation Sans", sans-serif; fill: #444; }
.t-123 { font: bold 10px "Liberation Sans", sans-serif; fill: #333; paint-order: stroke; stroke: #fff; stroke-width: 2px; }

/* formula bar */
.formula { height: 97px; background: #e6e6e6; display: flex; align-items: flex-start; padding: 13px 6px 0; }
.namebox { width: 127px; height: 32px; background: #fff; border: 1px solid #c6c6c6; display: flex; align-items: center; justify-content: space-between; padding: 0 7px; font-size: 16px; }
.grip { display: flex; flex-direction: column; gap: 3px; }
.grip b { display: block; width: 3px; height: 3px; background: #b0b0b0; }
.formula .grip { margin: 9px 17px 0 17px; }
.fxbox { width: 137px; height: 32px; background: #fff; border: 1px solid #c6c6c6; display: flex; align-items: center; padding: 0 15px; gap: 30px; }
.fxi { width: 15px; height: 15px; }
.fxbox svg + svg { width: 18px; }
.fxt { font: italic 19px "Liberation Serif", serif; color: #555; }
.input { flex: 1; height: 84px; margin-left: 3px; background: #fff; border: 1px solid #c6c6c6; border-bottom: 0; position: relative; }
.upcaret { position: absolute; right: 8px; top: 12px; width: 10px; height: 6px; }

/* sheet */
.sheetarea { height: 679px; padding-top: 12px; display: flex; background: #e6e6e6; }
.sheet { width: 1894px; height: 667px; overflow: hidden; flex: none; }
.colhead { display: flex; height: 23px; background: #d3efe0; border-bottom: 2px solid #217346; }
.corner { width: 34px; flex: none; background: #e6e6e6; padding: 3px 2px 0 15px; margin-bottom: -2px; }
.corner svg { display: block; width: 17px; height: 17px; }
.colhead span { width: 80px; flex: none; border-right: 1px solid #b6d6c4; text-align: center; color: #217346; font-size: 17px; line-height: 27px; }
.row { display: flex; height: 23px; }
.r2 { height: 60px; }
.r7 { height: 125px; }
.rh { width: 34px; flex: none; background: #d3efe0; border-right: 2px solid #217346; border-bottom: 1px solid #b6d6c4; color: #217346; font-size: 17px; display: flex; align-items: center; justify-content: center; padding-top: 3px; }
.rh.low { align-items: flex-end; line-height: 19px; padding-top: 0; }
.cell { width: 80px; flex: none; background: #c6c6c6; border-right: 1px solid #000; border-bottom: 1px solid #000; padding: 0 3px; font-size: 17px; line-height: 18px; color: #111; display: flex; align-items: flex-end; overflow: hidden; white-space: nowrap; }
.cell.num { justify-content: flex-end; }
.cell.top { border-right-color: #a6a6a6; }
.cell.sel { background: #fff; border-right-color: #fff; }
.cell.hd { background: #c6c600; align-items: center; padding: 2px 3px 0 4px; line-height: 22px; }
.cell.mid { align-items: center; padding-top: 5px; }
.fill { flex: 1; background: #c6c6c6 repeating-linear-gradient(90deg, transparent 0 79px, #a6a6a6 79px 80px); border-bottom: 1px solid #a6a6a6; }

/* vertical scrollbar */
.vscroll { width: 19px; margin-left: 4px; display: flex; flex-direction: column; padding-top: 2px; }
.sbtn { height: 18px; background: #fff; border: 1px solid #c6c6c6; display: flex; align-items: center; justify-content: center; flex: none; }
.sbtn svg { width: 10px; height: 6px; }
.vthumb { height: 597px; background: #fff; border: 1px solid #c6c6c6; margin: 2px 0 32px; flex: none; }

/* sheet tabs */
.tabbar { height: 30px; background: #e6e6e6; border-top: 1px solid #a6a6a6; border-bottom: 1px solid #d0d0d0; display: flex; align-items: center; }
.nav { width: 6px; height: 10px; flex: none; }
.n1 { margin-left: 28px; }
.n2 { margin-left: 23px; }
.tsep { width: 1px; height: 24px; background: #a0a0a0; margin-left: 41px; }
.sheet1 { font-size: 17px; color: #444; margin-left: 11px; margin-bottom: 5px; width: 70px; }
.sheet3 { width: 81px; height: 27px; align-self: flex-start; background: #fff; border: 1px solid #c6c6c6; border-top: 0; border-bottom: 2px solid #217346; color: #217346; font-size: 17px; text-align: center; line-height: 24px; }
.plus { width: 20px; height: 20px; margin-left: 34px; }
.grip.h { margin-left: auto; margin-right: 17px; }
.hscroll { width: 727px; height: 18px; margin-right: 25px; display: flex; }
.hbtn { width: 18px; flex: none; background: #fff; border: 1px solid #c6c6c6; display: flex; align-items: center; justify-content: center; }
.hbtn svg { width: 5px; height: 9px; }
.hthumb { width: 659px; background: #fff; border: 1px solid #c6c6c6; }
.htrack { width: 32px; background: #dcdcdc; }

/* status bar */
.status { height: 28px; background: #f3f3f3; border-bottom: 1px solid #333; display: flex; align-items: center; font-size: 15px; color: #333; padding-left: 9px; }
.stat { margin-right: 20px; white-space: nowrap; letter-spacing: .2px; }
.first-stat { margin-left: auto; }
.view { width: 50px; height: 27px; display: flex; align-items: center; justify-content: center; flex: none; }
.view.on { background: #d2d2d2; }
.view svg { width: 16px; height: 17px; }
.stat + .view { margin-left: 5px; }
.zsym { font-size: 16px; width: 10px; text-align: center; margin-left: 8px; }
.zoomtrack { width: 125px; height: 1px; background: #a6a6a6; margin-left: 6px; position: relative; }
.zoomtrack i { position: absolute; left: 59px; top: -11px; width: 6px; height: 22px; background: #666; }
.zsym.plusz { margin-left: 6px; }
.pct { margin-left: 18px; margin-right: 10px; font-size: 15px; white-space: nowrap; }

/* overlays */
.marquee { position: absolute; left: 0; top: 294px; width: 725px; height: 380px; border: 3px solid #f93a3a; pointer-events: none; }
.pastebtn { position: absolute; left: 1810px; top: 333px; width: 79px; height: 29px; background: #88bb9b; border: 1px solid #217346; display: flex; align-items: center; padding-left: 4px; gap: 2px; font-size: 16px; color: #444; }
.pb-i { width: 21px; height: 21px; flex: none; }
.pastebtn .caret { margin-left: 2px; }
.pastemenu { position: absolute; left: 1760px; top: 362px; width: 156px; height: 240px; background: #fff; border: 1px solid #c6c6c6; box-shadow: 0 0 2px rgba(0,0,0,.3); padding: 1px; }
.mhead { height: 28px; background: #e9e9e9; color: #666; font-weight: bold; font-size: 14px; line-height: 28px; padding-left: 11px; }
.mrow { display: flex; height: 38px; }
.mi { width: 38px; height: 38px; display: flex; align-items: center; justify-content: center; flex: none; }
.mi.on { background: #c6c6c6; border: 1px solid #999; }
.mi svg { width: 26px; height: 26px; overflow: visible; }

/* watermark */
.wm { position: absolute; left: 1475px; top: 828px; width: 345px; pointer-events: none; color: #ececec; }
.wm-logo { display: flex; align-items: flex-end; height: 106px; }
.wm-bai { font: bold 78px/76px "Liberation Sans", sans-serif; width: 117px; text-shadow: 0 0 2px #aaa; margin-bottom: -6px; }
.wm-paw { position: relative; width: 104px; height: 106px; flex: none; }
.wm-paw svg { display: block; width: 102px; height: 108px; }
.wm-du { position: absolute; left: 24px; top: 51px; font: 46px/46px "Liberation Sans", sans-serif; color: #b9b9b9; letter-spacing: -1px; }
.wm-cn { font: bold 57px/56px "Noto Sans CJK SC", sans-serif; text-shadow: 0 0 2px #aaa; white-space: nowrap; }
.wm-url { font: 42.500px/44px "Liberation Sans", sans-serif; margin-top: 11px; text-shadow: 0 0 2px #999; white-space: nowrap; }
```
